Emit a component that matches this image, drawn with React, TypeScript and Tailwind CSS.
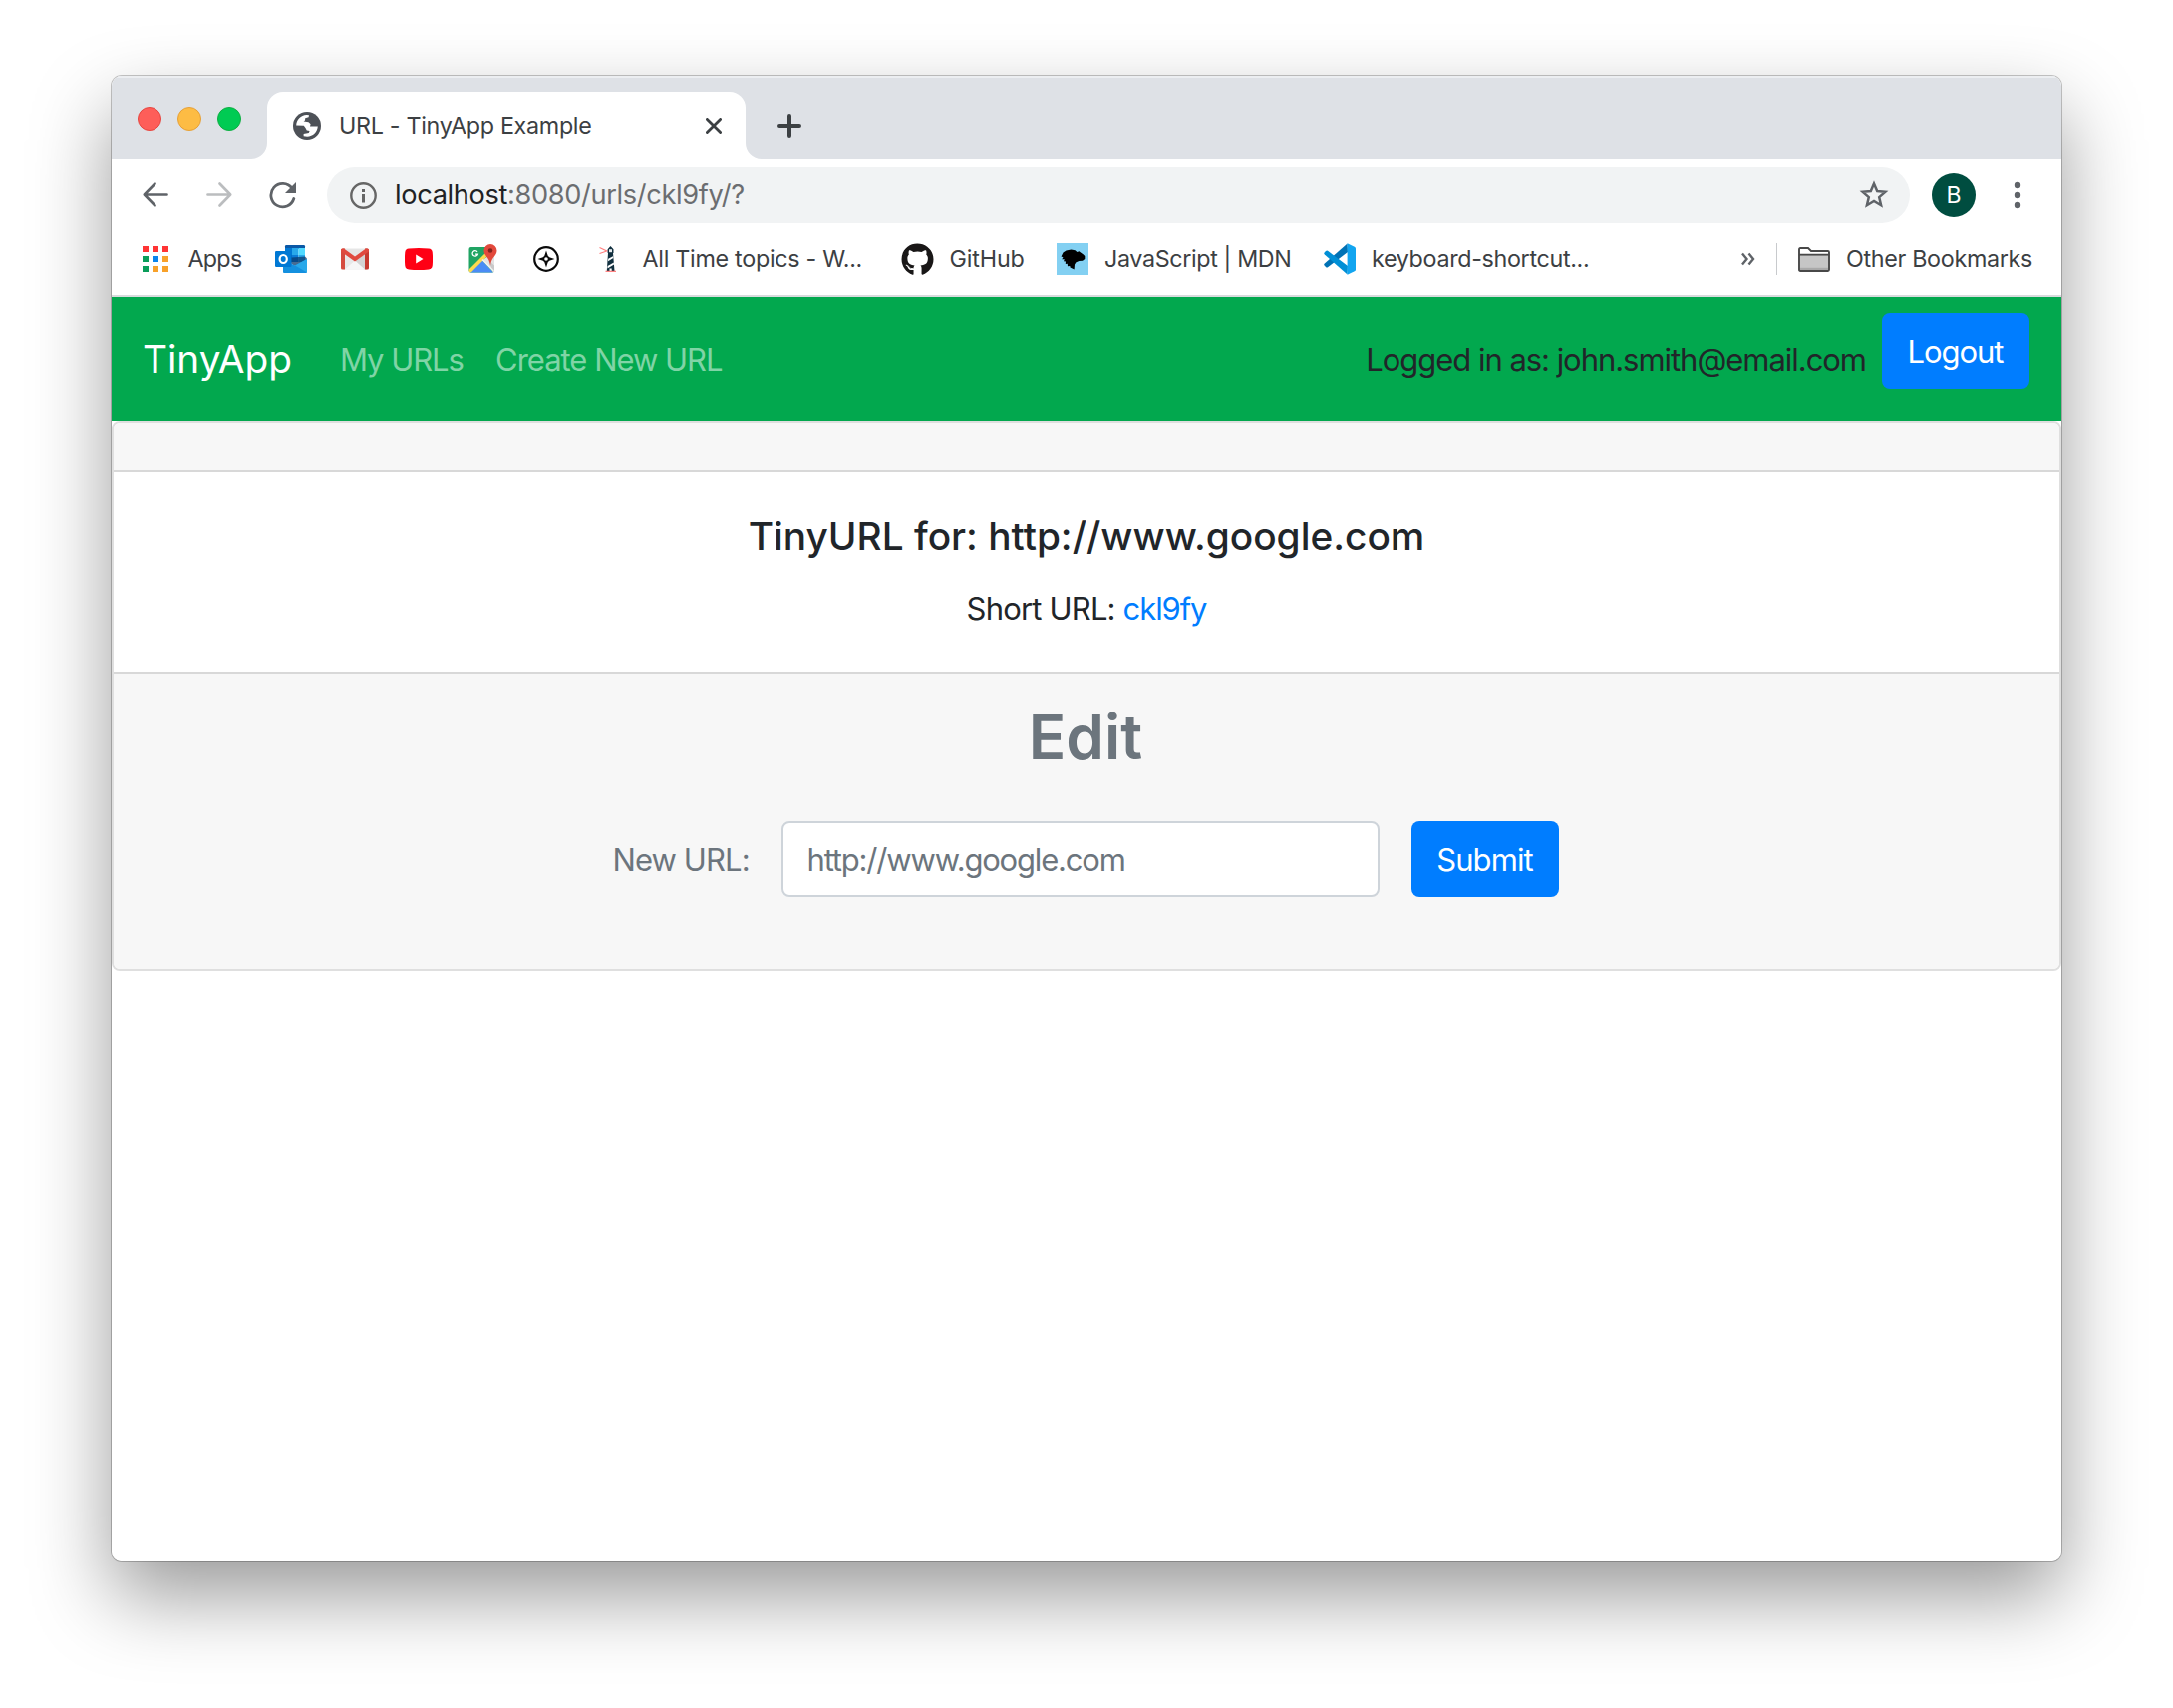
import type { ReactNode } from 'react';
import { FaGithub } from 'react-icons/fa';

function Globe() {
  return (
    <svg width="28" height="28" viewBox="0 0 28 28">
      <circle cx="14" cy="14" r="14" fill="#4d5157" />
      <path
        fill="#fff"
        d="M3.2 13.6C3.4 8 7.800 3.400 13.600 3.100L16 3.300 15.600 5.200 12.200 6.200 12 8.600 10.600 9.600 15.500 10.200 17.600 12.200 17 14.600 24.800 14.600C24.400 20.200 20 24.700 14.200 24.800L10.600 24.300 10.600 22 15.800 21 16.600 19 13.800 18.600 12.600 16.200 10.800 13.800Z"
      />
    </svg>
  );
}

function AppsGrid() {
  const fills = ['#ff3434', '#ff3434', '#ff3434', '#0a9d5a', '#0a84ec', '#f8a12a', '#0a9d5a', '#f8a12a', '#f8a12a'];
  return (
    <div className="grid grid-cols-3 gap-1">
      {fills.map((fill, i) => (
        <svg key={i} width="6" height="6">
          <rect width="6" height="6" fill={fill} />
        </svg>
      ))}
    </div>
  );
}

function Outlook() {
  return (
    <svg width="32" height="28" viewBox="0 0 32 28">
      <path fill="#0a58a6" d="M10 1.2Q10 0 11.2 0H28.8Q30 0 30 1.2V4H10Z" />
      <rect x="10" y="3" width="7" height="7" fill="#0078d4" />
      <rect x="17" y="3" width="6.5" height="7" fill="#28a8ea" />
      <rect x="23.5" y="3" width="6.5" height="7" fill="#50d9ff" />
      <rect x="10" y="10" width="7" height="7" fill="#0364b8" />
      <rect x="17" y="10" width="6.5" height="7" fill="#0a7bd6" />
      <rect x="23.5" y="10" width="6.5" height="7" fill="#28a8ea" />
      <path fill="#0a3a6e" d="M30 11.5 32 13.5V16L20 21 10 15V13Z" opacity=".75" />
      <path fill="#1490df" d="M32 14V27Q32 28 31 28H9Q8 28 8 27V15L20 20.5Z" />
      <path fill="#28a8ea" d="M32 14V27.5L20 20.5Z" />
      <rect y="6" width="16.5" height="16" rx="1.2" fill="#0078d4" />
      <ellipse cx="8.2" cy="14" rx="3.6" ry="4" fill="none" stroke="#fff" strokeWidth="2.2" />
    </svg>
  );
}

function Gmail() {
  return (
    <svg width="28" height="22" viewBox="0 0 28 22">
      <path fill="#e8e8e8" d="M2 0.5H26V21.5H2Z" />
      <path fill="#d3d3d3" d="M14 13 26 3V21.5H23Z" />
      <path fill="#f6f6f6" d="M4 21.5 14 12.5 24 21.5Z" />
      <path fill="#e6e6e6" d="M3 1H25L14 9Z" />
      <path fill="#d54b3f" d="M0 2Q0 .5 1.6 .5H4V21.5H1.5Q0 21.5 0 20Z" />
      <path fill="#c63a30" d="M28 2Q28 .5 26.4 .5H24V21.5H26.5Q28 21.5 28 20Z" />
      <path fill="#e04a3f" d="M0 2Q0 .5 1.6 .5H3L14 8.5 25 .5H26.4Q28 .5 28 2V3.5L14 13.5 0 3.5Z" />
    </svg>
  );
}

function YouTube() {
  return (
    <svg width="28" height="22" viewBox="0 0 28 22">
      <path
        fill="#ff0014"
        d="M4 .6Q14-.4 24 .6 27.2 1 27.7 4 28.4 11 27.7 18 27.2 21 24 21.4 14 22.4 4 21.4.8 21 .3 18-.4 11 .3 4 .8 1 4 .6Z"
      />
      <path fill="#fff" d="M11.2 6.6V15.4L18.5 11Z" />
    </svg>
  );
}

function Maps() {
  return (
    <svg width="29" height="29" viewBox="0 0 29 29">
      <defs>
        <clipPath id="sheet">
          <rect x="0.5" y="3" width="25.5" height="25.5" rx="2" />
        </clipPath>
      </defs>
      <g clipPath="url(#sheet)">
        <rect y="3" width="27" height="26" fill="#1fa463" />
        <path fill="#e3e3e3" d="M26 8V28.5L14 16Z" />
        <path fill="#4a8cf5" d="M13 15.5 25.5 29H0.5Z" />
        <path fill="#c9c9c9" d="M20 16 26.5 22V29H25Z" />
        <path d="M0 28.5 19 9.5" stroke="#fdd94f" strokeWidth="3.6" />
        <path d="M14 15.5 27 29" stroke="#efefef" strokeWidth="1.6" />
      </g>
      <path d="M9 7.8A2.7 2.7 0 1 0 9.4 10.2H7" fill="none" stroke="#fff" strokeWidth="1.3" />
      <path fill="#e2493c" d="M22 0A6.5 6.5 0 0 1 28.5 6.5C28.5 12 22.8 13 22 22 21.2 13 15.5 12 15.5 6.5A6.5 6.5 0 0 1 22 0Z" />
      <circle cx="22" cy="6.5" r="2.3" fill="#84231c" />
    </svg>
  );
}

function Compass() {
  return (
    <svg width="26" height="26" viewBox="0 0 26 26">
      <circle cx="13" cy="13" r="11.8" fill="none" stroke="#0a0a0a" strokeWidth="2.2" />
      <path
        fill="#0a0a0a"
        fillRule="evenodd"
        d="M13 4.5 14.7 9.8 16.2 11.3 21.5 13 16.2 14.7 14.7 16.2 13 21.5 11.3 16.2 9.8 14.7 4.5 13 9.8 11.3 11.3 9.8ZM13 11.2A1.8 1.8 0 1 0 13 14.8 1.8 1.8 0 1 0 13 11.2Z"
      />
    </svg>
  );
}

function Lighthouse() {
  return (
    <svg width="17" height="26" viewBox="0 0 17 26">
      <path d="M.5 1.5 7.8 5 .5 7.5" fill="none" stroke="#ff7d7d" strokeWidth="1.1" />
      <path fill="#12303f" d="M8.6 3.2 11.5 0 14.5 3.2V7H14L15.5 25H7.8L9 7H8.6Z" />
      <rect x="10" y="3.2" width="3" height="3" fill="#e8edf0" />
      <path fill="#fff" d="M9.2 12.8 14 10.2 14.3 12 9 15.2ZM8.6 20 14.8 16.6 15 18.6 8.4 22.4Z" />
      <rect x="10.5" y="22.5" width="2.2" height="2.5" fill="#fff" />
      <path d="M6.5 25.3H17" stroke="#ff6b6b" strokeWidth="1.1" />
    </svg>
  );
}

function Mdn() {
  return (
    <svg width="32" height="32" viewBox="0 0 32 32">
      <rect width="32" height="32" fill="#83d0f2" />
      <path
        fill="#000"
        d="M4.500 13.500 6.500 9.500 9.500 7.500 14.500 6.600 18.500 7.200 20.500 9 22.500 8.200 24 9.500 26.500 11.200 28.300 13 28.300 16 26 17.800 22.500 18 19.500 19.300 18 21.500 17.600 26.500 13.500 24.500 13.300 23 11 23.300 10.800 20.800 8.800 21 9 18.500 7 18.300 7.800 16.300 5.200 16.200 6.500 14.300Z"
      />
    </svg>
  );
}

function VSCode() {
  return (
    <svg width="32" height="32" viewBox="0 0 32 32">
      <path fill="#0072b5" d="M23.6 .4 24 9 4 24.2Q3 24.9 2 24L.6 22.6Q-.3 21.6.8 20.6Z" />
      <path fill="#008fd6" d="M23.6 31.6 24 23 4 7.8Q3 7.1 2 8L.6 9.4Q-.3 10.4.8 11.4Z" />
      <path fill="#12a5f0" d="M23.6 31.7V.3L30.8 3.7Q32 4.3 32 5.6V26.4Q32 27.7 30.8 28.3Z" />
    </svg>
  );
}

function Folder() {
  return (
    <svg width="32" height="25" viewBox="0 0 32 25">
      <path
        fill="#fff"
        stroke="#484848"
        strokeWidth="1.9"
        d="M1 2.2Q1 1 2.2 1H10L13 4H29.8Q31 4 31 5.2V22.8Q31 24 29.8 24H2.2Q1 24 1 22.8Z"
      />
      <rect x="2" y="8.5" width="28" height="14.5" fill="#c6c6c6" />
      <rect x="2" y="20.8" width="28" height="2.2" fill="#a9a9a9" />
      <path d="M1 7.7H31" stroke="#484848" strokeWidth="1.9" />
    </svg>
  );
}

function Bookmark({ children, className }: { children: ReactNode; className: string }) {
  return <span className={`whitespace-nowrap text-[23.3px] leading-none ${className}`}>{children}</span>;
}

function TabStrip() {
  return (
    <div className="flex h-[84px] items-end bg-[#dee1e6] shadow-[inset_0_2px_0_#eceef1]">
      <div className="h-full w-[156px] flex-none pr-[14px] pl-[26px] pt-[31px]">
        <div className="flex gap-4">
          <span className="size-6 rounded-full border border-[#e64640] bg-[#fe5e59]" />
          <span className="size-6 rounded-full border border-[#e6a038] bg-[#fdbc44]" />
          <span className="size-6 rounded-full border border-[#0fae42] bg-[#00cb53]" />
        </div>
      </div>
      <div className="relative flex h-[68px] w-[480px] items-center rounded-t-[16px] bg-white pl-[26px] pr-6">
        <svg className="absolute bottom-0 -left-4" width="16" height="16">
          <path d="M16 0A16 16 0 0 1 0 16H16Z" fill="#fff" />
        </svg>
        <svg className="absolute bottom-0 -right-4" width="16" height="16">
          <path d="M0 0A16 16 0 0 0 16 16H0Z" fill="#fff" />
        </svg>
        <Globe />
        <span className="ml-[18px] whitespace-nowrap text-[23.3px] leading-none tracking-[-0.3px] text-[#3c4043]">
          URL - TinyApp Example
        </span>
        <svg className="ml-auto" width="16" height="16" viewBox="0 0 16 16">
          <path d="M1.4 1.4 14.6 14.6M14.6 1.4 1.4 14.6" stroke="#3c4043" strokeWidth="2.8" strokeLinecap="round" />
        </svg>
      </div>
      <div className="flex h-[68px] items-center pl-8">
        <svg width="24" height="24" viewBox="0 0 24 24">
          <path d="M12 2V22M2 12H22" stroke="#3c4043" strokeWidth="4" strokeLinecap="round" />
        </svg>
      </div>
    </div>
  );
}

function Toolbar() {
  return (
    <div className="flex h-[72px] items-center bg-white pl-[30px] pr-[39px]">
      <div className="flex w-[186px] items-center">
        <svg width="28" height="28" viewBox="0 0 28 28" fill="none" stroke="#5f6368" strokeWidth="2.7" strokeLinecap="round" strokeLinejoin="round">
          <path d="M25.5 13.5H3M13.5 2.5 2.8 13.5 13.5 24.5" />
        </svg>
        <svg className="ml-9" width="28" height="28" viewBox="0 0 28 28" fill="none" stroke="#bbbdbf" strokeWidth="2.7" strokeLinecap="round" strokeLinejoin="round">
          <path d="M2.5 13.5H25M14.5 2.5 25.2 13.5 14.5 24.5" />
        </svg>
        <svg className="ml-[35px]" width="30" height="28" viewBox="0 0 30 28" fill="none">
          <path d="M24 7.2A11.7 11.7 0 1 0 25.8 17.5" stroke="#5f6368" strokeWidth="2.8" strokeLinecap="round" />
          <path d="M28 1V12H17Z" fill="#5f6368" />
        </svg>
      </div>
      <div className="flex h-14 w-[1588px] items-center rounded-full bg-[#f1f3f4] pl-[23px] pr-[20px]">
        <svg width="27" height="27" viewBox="0 0 27 27">
          <circle cx="13.5" cy="13.5" r="12.2" fill="none" stroke="#666" strokeWidth="2.4" />
          <rect x="12" y="7" width="3" height="3" fill="#666" />
          <rect x="12" y="12" width="3" height="8.5" fill="#666" />
        </svg>
        <span className="ml-[18px] whitespace-nowrap text-[27.2px] leading-none tracking-[-0.35px] text-[#6b6d70]">
          <span className="text-[#202124]">localhost</span>:8080/urls/ckl9fy/?
        </span>
        <svg className="ml-auto" width="32" height="32" viewBox="0 0 32 32">
          <path
            d="M16 4.4 19.2 12 27.4 12.7 21.2 18.1 23.1 26.2 16 21.9 8.9 26.2 10.8 18.1 4.6 12.7 12.800 12Z"
            fill="none"
            stroke="#5f6368"
            strokeWidth="2.5"
          />
        </svg>
      </div>
      <div className="ml-[22px] flex size-11 items-center justify-center rounded-full bg-[#004d40] text-[23px] leading-none text-white">B</div>
      <svg className="ml-auto" width="10" height="28" viewBox="0 0 10 28" fill="#5f6368">
        <circle cx="5" cy="4" r="3.2" />
        <circle cx="5" cy="14" r="3.2" />
        <circle cx="5" cy="24" r="3.2" />
      </svg>
    </div>
  );
}

function BookmarksBar() {
  return (
    <div className="flex h-[64px] items-center bg-white pb-2 pl-[31px] pr-[29px] text-[#3c4043]">
      <div className="flex w-[133px] items-center">
        <AppsGrid />
        <Bookmark className="ml-[19.5px] tracking-[-0.74px]">Apps</Bookmark>
      </div>
      <div className="flex w-[66px]"><Outlook /></div>
      <div className="flex w-[64px]"><Gmail /></div>
      <div className="flex w-[64px]"><YouTube /></div>
      <div className="flex w-[65px] -translate-y-px"><Maps /></div>
      <div className="flex w-[66px]"><Compass /></div>
      <div className="flex w-[303px] items-center">
        <Lighthouse />
        <Bookmark className="ml-[26.5px] tracking-[-0.28px]">All Time topics - W...</Bookmark>
      </div>
      <div className="flex w-[156px] items-center">
        <FaGithub className="size-[33px] text-[#191717]" />
        <Bookmark className="ml-[15.5px] tracking-[-0.13px]">GitHub</Bookmark>
      </div>
      <div className="flex w-[268px] items-center">
        <Mdn />
        <Bookmark className="ml-4 tracking-[-0.36px]">JavaScript | MDN</Bookmark>
      </div>
      <div className="flex items-center">
        <VSCode />
        <Bookmark className="ml-4 tracking-[-0.33px]">keyboard-shortcut...</Bookmark>
      </div>
      <svg className="ml-auto" width="14" height="14" viewBox="0 0 14 14" fill="none" stroke="#5f6368" strokeWidth="2.4">
        <path d="M1 1.5 5.500 7 1 12.500M7.500 1.500 12 7 7.500 12.500" />
      </svg>
      <div className="ml-[21px] h-8 w-px bg-[#c8cacd]" />
      <div className="ml-[21px]"><Folder /></div>
      <Bookmark className="ml-4 tracking-[-0.32px]">Other Bookmarks</Bookmark>
    </div>
  );
}

function Navbar() {
  return (
    <nav className="flex h-[124px] items-center bg-[#02a84e] px-8 text-[31px] leading-none">
      <span className="-ml-px w-[198px] whitespace-nowrap text-[38.8px] tracking-[-0.05px] text-white">TinyApp</span>
      <span className="w-[156px] whitespace-nowrap tracking-[-1.04px] text-[#80d4a6]">My URLs</span>
      <span className="whitespace-nowrap tracking-[-1.01px] text-[#80d4a6]">Create New URL</span>
      <span className="ml-auto whitespace-nowrap tracking-[-1.04px] text-[#212529]">Logged in as: john.smith@email.com</span>
      <button className="-mt-4 ml-4 flex h-[76px] w-[148px] items-center justify-center rounded-lg bg-[#007dff] pr-px tracking-[-1.04px] text-white">
        Logout
      </button>
    </nav>
  );
}

function UrlCard() {
  return (
    <section className="flex h-[552px] flex-col overflow-hidden rounded-lg border-2 border-[#dfdfdf] bg-white">
      <div className="h-[50px] flex-none border-b-2 border-[#d8d8d8] bg-[#f7f7f7]" />
      <div className="flex h-[200px] flex-none flex-col items-center pt-10">
        <h5 className="whitespace-nowrap text-[38.8px] font-[520] leading-[48px] text-[#212529]">
          TinyURL for: http://www.google.com
        </h5>
        <p className="mt-[25px] whitespace-nowrap text-[31px] leading-[48px] tracking-[-0.82px] text-[#212529]">
          Short URL: <span className="tracking-[-1.1px] text-[#007dff]">ckl9fy</span>
        </p>
      </div>
      <div className="flex flex-1 flex-col items-center border-t-2 border-[#d8d8d8] bg-[#f7f7f7] pt-6 text-[31px] leading-none text-[#6c757d]">
        <h1 className="pr-0.5 text-[62px] font-[560] leading-[80px]">Edit</h1>
        <div className="mt-11 flex items-center pr-0.5">
          <span className="w-[169px] whitespace-nowrap tracking-[-0.91px]">New URL:</span>
          <div className="flex h-[76px] w-[600px] items-center rounded-lg border-2 border-[#ced4da] bg-white pl-6">
            <span className="whitespace-nowrap tracking-[-1.18px]">http://www.google.com</span>
          </div>
          <button className="ml-8 flex h-[76px] w-[148px] items-center justify-center rounded-lg bg-[#007dff] tracking-[-0.91px] text-white">
            Submit
          </button>
        </div>
      </div>
    </section>
  );
}

export default function App() {
  return (
    <div className="h-[1714px] w-[2180px] overflow-hidden bg-white px-[112px] pt-[76px] font-[Inter,sans-serif] font-[430]">
      <div className="h-[1490px] w-[1956px] rounded-[10px] shadow-[0_0_0_1px_rgba(0,0,0,0.22),0_36px_80px_rgba(0,0,0,0.4)]">
        <div className="h-full overflow-hidden rounded-[10px] bg-white">
          <TabStrip />
          <Toolbar />
          <BookmarksBar />
          <div className="h-[2px] bg-[#d9dbdd]" />
          <Navbar />
          <UrlCard />
        </div>
      </div>
    </div>
  );
}
